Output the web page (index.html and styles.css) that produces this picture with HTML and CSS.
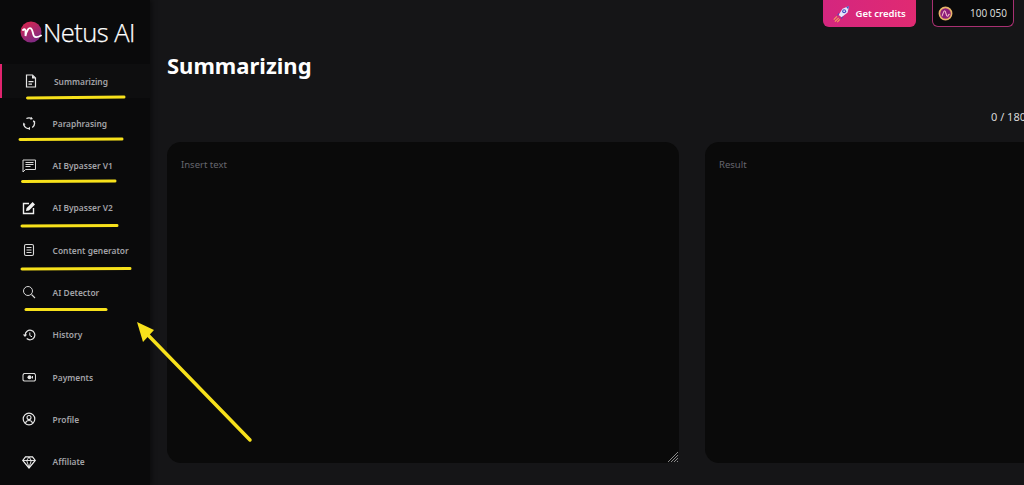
FILE: index.html
```html
<!DOCTYPE html>
<html lang="en">
<head>
<meta charset="utf-8">
<title>Netus AI</title>
<link rel="stylesheet" href="styles.css">
</head>
<body>
<div class="app">
  <aside class="sidebar">
    <div class="logo">
      <svg class="logo-mark" viewBox="0 0 22 22">
        <defs><linearGradient id="lg" x1="0.2" y1="0" x2="0.7" y2="1"><stop offset="0" stop-color="#d8264f"/><stop offset="1" stop-color="#7a2a86"/></linearGradient></defs>
        <circle cx="11" cy="11" r="10.500" fill="url(#lg)"/>
        <path d="M3 9C4.500 7.500 5.500 8.500 5.500 10V15C6.500 9.500 9 6 11 7.500c2 1.500 1.500 5 3 7.500 1 1.500 3.500 1.500 7 -.5" fill="none" stroke="#fff" stroke-width="1.800" stroke-linecap="round"/>
      </svg>
      <span class="logo-text">Netus AI</span>
    </div>
    <nav class="nav">
      <a class="item active">
        <svg class="ic" viewBox="0 0 14 14"><path d="M2.500 1h6L11.500 4v9h-9z" fill="none" stroke="#e6e6e6" stroke-width="1.200"/><path d="M8 1v3.500h3.500z" fill="#e6e6e6"/><path d="M4.500 7h5v1.300h-5zM4.500 9.500h3.500v1.300H4.500z" fill="#e6e6e6"/></svg>
        <span>Summarizing</span>
      </a>
      <a class="item">
        <svg class="ic" viewBox="0 0 14 14"><g fill="none" stroke="#e6e6e6" stroke-width="1.300"><path d="M4.400 2.500A5.500 5.500 0 0 1 9.600 2.500"/><path d="M12.300 5.600A5.500 5.500 0 0 1 10.300 11.500"/><path d="M7.800 12.500A5.500 5.500 0 0 1 1.700 8.500"/></g><path d="M9 .8 11 3 8.300 3.800zM13.500 6 10.800 6.300 11.500 4zM8 10.800v3.200L5.700 12.400zM1 9.500 1.300 6.500 3.500 8.200z" fill="#e6e6e6"/></svg>
        <span>Paraphrasing</span>
      </a>
      <a class="item">
        <svg class="ic" viewBox="0 0 14 14"><path d="M1 1h12.500v9.500H3.500L1 13z" fill="none" stroke="#d8d8d8" stroke-width="1"/><path d="M3.500 3.500h8M3.500 5.500h8M3.500 7.500h5" stroke="#d8d8d8" stroke-width="1"/></svg>
        <span>AI Bypasser V1</span>
      </a>
      <a class="item">
        <svg class="ic" viewBox="0 0 14 14"><path d="M7 2.500H1.500v10h10V7" fill="none" stroke="#f0f0f0" stroke-width="1.400"/><path d="M4 10l.6-3 6-6 2.400 2.400-6 6z" fill="#f0f0f0"/></svg>
        <span>AI Bypasser V2</span>
      </a>
      <a class="item">
        <svg class="ic" viewBox="0 0 14 14"><rect x="2.500" y="1.500" width="9" height="11" rx="1.500" fill="none" stroke="#d8d8d8" stroke-width="1.100"/><path d="M4.500 4.500h5M4.500 7h5M4.500 9.500h5" stroke="#d8d8d8" stroke-width="1"/></svg>
        <span>Content generator</span>
      </a>
      <a class="item">
        <svg class="ic" viewBox="0 0 14 14"><circle cx="6" cy="6" r="4.500" fill="none" stroke="#d8d8d8" stroke-width="1"/><path d="m9.500 9.500 3.500 3.500" stroke="#d8d8d8" stroke-width="1.100"/></svg>
        <span>AI Detector</span>
      </a>
      <a class="item">
        <svg class="ic" viewBox="0 0 14 14"><path d="M3.200 7a4.800 4.800 0 1 1 1.500 3.500" fill="none" stroke="#e6e6e6" stroke-width="1.200"/><path d="M.8 6.500h4.400L3 9z" fill="#e6e6e6"/><path d="M7.800 4.500V7.500L10 8.800" fill="none" stroke="#e6e6e6" stroke-width="1"/></svg>
        <span>History</span>
      </a>
      <a class="item">
        <svg class="ic" viewBox="0 0 14 14"><path d="M2 3.500h10.500L13.500 5v5l-1 1H2L1 10V5z" fill="none" stroke="#d8d8d8" stroke-width="1.100"/><circle cx="7.500" cy="7.200" r="2" fill="#e6e6e6"/><path d="M10.500 6v2.500" stroke="#e6e6e6" stroke-width="1"/></svg>
        <span>Payments</span>
      </a>
      <a class="item">
        <svg class="ic" viewBox="0 0 14 14"><circle cx="7" cy="7" r="5.800" fill="none" stroke="#e6e6e6" stroke-width="1.200"/><circle cx="7" cy="5.500" r="2" fill="none" stroke="#e6e6e6" stroke-width="1.100"/><path d="M3.500 11c.5-2 2-2.500 3.500-2.500s3 .5 3.500 2.500" fill="none" stroke="#e6e6e6" stroke-width="1.100"/></svg>
        <span>Profile</span>
      </a>
      <a class="item">
        <svg class="ic" viewBox="0 0 14 14"><path d="M3.500 1.800h7L13.300 5.500 7 13 .7 5.500z" fill="none" stroke="#f0f0f0" stroke-width="1.200"/><path d="M1 5.500h12M4.700 5.500 7 12.500 9.300 5.500 7 2 4.700 5.500" fill="none" stroke="#f0f0f0" stroke-width=".900"/></svg>
        <span>Affiliate</span>
      </a>
    </nav>
  </aside>
  <main class="main">
    <div class="topbar">
      <button class="credits">
        <svg class="rocket" viewBox="0 0 18 18">
          <path d="M6 10 10 3.500 17 .5 15.500 7.500 9 12.500z" fill="#e4e7fb"/>
          <circle cx="11.800" cy="6" r="2.100" fill="#3f4fc0"/>
          <circle cx="11.800" cy="6" r=".9" fill="#e4e7fb"/>
          <path d="M14 1.500 17 .5 16 4zM6 10l-2 .5 2.500-3zM9 12.500l-.5 2 3-3z" fill="#3f4fc0"/>
          <path d="M.8 15l3.400-3.400M2 17l4-4M4.500 17.500l2.800-2.800" stroke="#f4a35c" stroke-width="1.100"/>
        </svg>
        <span>Get credits</span>
      </button>
      <div class="balance">
        <svg class="coin" viewBox="0 0 16 16"><circle cx="8" cy="8" r="6.500" fill="#8c1d7a" stroke="#e8b46a" stroke-width="1.800"/><path d="M4 11C5 11 5.500 5 7 5s1.500 6 3 6 1-3 2.500-2" fill="none" stroke="#f7c2cf" stroke-width="1.100"/></svg>
        <span>100 050</span>
      </div>
    </div>
    <h1 class="title">Summarizing</h1>
    <div class="counter">0 / 1800</div>
    <div class="panels">
      <div class="panel"><span class="hint">Insert text</span>
        <svg class="grip" viewBox="0 0 12 12"><path d="M11 1 1 11M11 4 4 11M11 7l-4 4M11 10l-1 1" stroke="#8a8a8a" stroke-width="1"/></svg>
      </div>
      <div class="panel result"><span class="hint">Result</span></div>
    </div>
  </main>
</div>
<svg class="marks" viewBox="0 0 1024 485" width="1024" height="485">
  <g stroke="#f7e11b" fill="none" stroke-linecap="round">
    <path d="M27.500 98 124 97" stroke-width="3"/>
    <path d="M20 139.500 122 139" stroke-width="3"/>
    <path d="M22.500 181.500 115 181" stroke-width="3"/>
    <path d="M22 226 117 225.500" stroke-width="3"/>
    <path d="M22 269 130 268.500" stroke-width="3"/>
    <path d="M26 309.500 106 309.500" stroke-width="3"/>
    <path d="M250 440 146 333" stroke-width="3.500"/>
  </g>
  <path d="M137 322 154 330 143 342z" fill="#f7e11b"/>
</svg>
</body>
</html>
```
FILE: styles.css
```css
* { box-sizing: border-box; }
html, body { margin: 0; height: 100%; overflow: hidden; background: #151517; }
body { font-family: "Noto Sans", "Open Sans", sans-serif; color: #fff; position: relative; }
.app { display: flex; height: 485px; width: 1024px; overflow: hidden; }
.sidebar { width: 150px; flex: none; background: #0a0a0b; box-shadow: 2px 0 5px rgba(0,0,0,.45); }
.logo { height: 64px; display: flex; align-items: center; padding-left: 20px; gap: 1px; }
.logo-mark { width: 22px; height: 22px; flex: none; }
.logo-text { font-family: "Open Sans", sans-serif; font-weight: 300; font-size: 25.500px; letter-spacing: -.55px; color: #fff; -webkit-text-stroke: .25px #fff; }
.nav { display: flex; flex-direction: column; gap: 8.300px; }
.item { height: 34px; display: flex; align-items: center; padding-left: 22px; gap: 16.600px; font-size: 8.400px; font-weight: 600; color: #a3a3a8; }
.item.active { border-left: 2px solid #e0246e; background: #0e0e0f; padding-left: 22px; gap: 16px; }
.ic { width: 14px; height: 14px; flex: none; }
.main { flex: 1; min-width: 0; padding: 0 0 0 17px; display: flex; flex-direction: column; }
.topbar { display: flex; justify-content: flex-end; gap: 16px; padding-right: 10px; height: 27px; }
.credits { width: 93px; height: 27px; border: 0; border-radius: 0 0 6px 6px; background: linear-gradient(90deg, #d4267f, #e02a72); color: #fff; font: 600 9.500px "Noto Sans", sans-serif; display: flex; align-items: center; padding: 0 0 0 10px; gap: 5.500px; }
.rocket { width: 17px; height: 18px; flex: none; }
.balance { width: 82px; height: 27px; border: 1.500px solid #a83072; border-top: 0; border-radius: 0 0 6px 6px; background: #0a0a0b; display: flex; align-items: center; justify-content: space-between; padding: 0 6px 0 5px; font-size: 10px; color: #d8d8d8; }
.coin { width: 15px; height: 15px; flex: none; }
.title { margin: 22px 0 0; font-size: 22px; line-height: 32px; font-weight: 700; color: #fff; }
.counter { margin-top: 28px; align-self: flex-start; margin-left: 824px; font-size: 11px; line-height: 16px; color: #d8d8d8; white-space: nowrap; }
.panels { display: flex; gap: 26px; margin-top: 17px; width: 1000px; flex: none; }
.panel { position: relative; width: 512px; height: 321px; flex: none; background: #0a0a0a; border-radius: 14px; padding: 16px 14px; }
.hint { font-size: 9.500px; color: #66666e; display: block; }
.grip { position: absolute; right: 0; bottom: 0; width: 12px; height: 12px; }
.marks { position: absolute; left: 0; top: 0; pointer-events: none; }
```
